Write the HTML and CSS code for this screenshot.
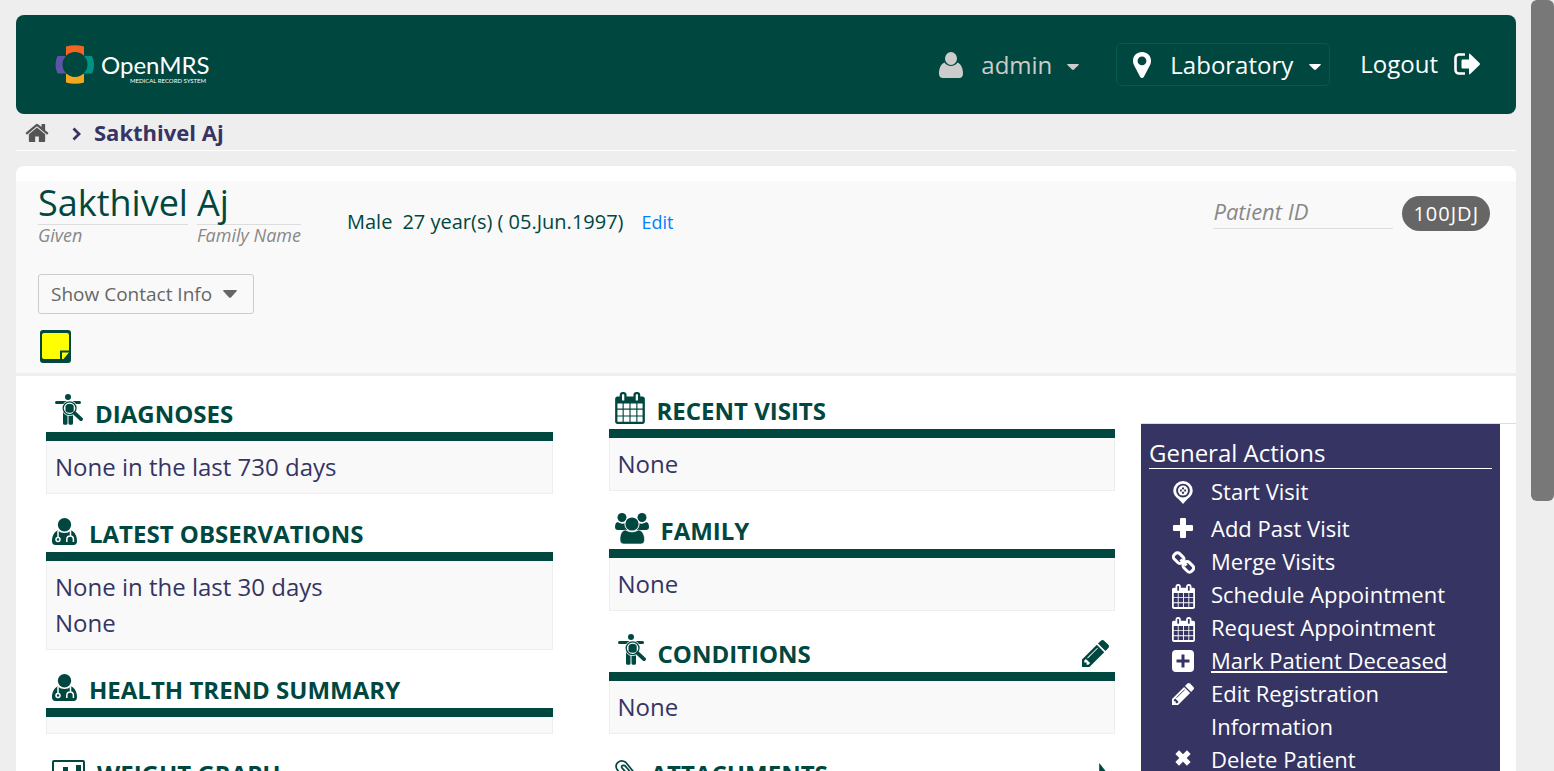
FILE: index.html
```html
<!DOCTYPE html>
<html lang="en">
<head>
<meta charset="utf-8">
<title>OpenMRS - Sakthivel Aj</title>
<link rel="stylesheet" href="styles.css">
</head>
<body>
<svg class="sprite" aria-hidden="true">
  <symbol id="i-home" viewBox="64 192 1664 1344"><path d="M1472 992v480q0 26-19 45t-45 19h-384v-384h-256v384h-384q-26 0-45-19t-19-45v-480q0-1 .5-3t.5-3l575-474 575 474q1 2 1 6zm223-69l-62 74q-8 9-21 11h-3q-13 0-21-7l-692-577-692 577q-12 8-24 7-13-2-21-11l-62-74q-8-10-7-23.500t11-21.500l719-599q32-26 76-26t76 26l244 204v-195q0-14 9-23t23-9h192q14 0 23 9t9 23v408l219 182q10 8 11 21.500t-7 23.500z"/></symbol>
  <symbol id="i-pencil" viewBox="128 149 1515 1515"><path d="M491 1536l91-91-235-235-91 91v107h128v128h107zm523-928q0-22-22-22-10 0-17 7l-542 542q-7 7-7 17 0 22 22 22 10 0 17-7l542-542q7-7 7-17zm-54-192l416 416-832 832h-416v-416zm683 96q0 53-37 90l-166 166-416-416 166-165q36-38 90-38 53 0 91 38l235 234q37 39 37 91z"/></symbol>
  <symbol id="i-calendar" viewBox="64 0 1664 1792"><path d="M192 1664h288v-288h-288v288zm352 0h320v-288h-320v288zm-352-352h288v-320h-288v320zm352 0h320v-320h-320v320zm-352-384h288v-288h-288v288zm736 736h320v-288h-320v288zm-384-736h320v-288h-320v288zm768 736h288v-288h-288v288zm-384-352h320v-320h-320v320zm-352-864v-288q0-13-9.500-22.500t-22.500-9.500h-64q-13 0-22.500 9.500t-9.500 22.500v288q0 13 9.500 22.500t22.500 9.500h64q13 0 22.500-9.500t9.500-22.500zm736 864h288v-320h-288v320zm-384-384h320v-288h-320v288zm384 0h288v-288h-288v288zm32-480v-288q0-13-9.500-22.500t-22.500-9.500h-64q-13 0-22.500 9.500t-9.500 22.500v288q0 13 9.500 22.500t22.500 9.500h64q13 0 22.500-9.500t9.500-22.500zm384-64v1280q0 52-38 90t-90 38h-1408q-52 0-90-38t-38-90v-1280q0-52 38-90t90-38h128v-96q0-66 47-113t113-47h64q66 0 113 47t47 113v96h384v-96q0-66 47-113t113-47h64q66 0 113 47t47 113v96h128q52 0 90 38t38 90z"/></symbol>
  <symbol id="i-user" viewBox="0 0 24 26"><ellipse cx="12" cy="6.500" rx="6" ry="6.500"/><path d="M5.500 10.500C8 15 16 15 18.500 10.500 22.500 12 24 17 24 21.500 24 24.500 22.500 26 20 26H4C1.500 26 0 24.500 0 21.500 0 17 1.500 12 5.500 10.500z"/></symbol>
  <symbol id="i-pin" viewBox="0 0 18 26"><path fill-rule="evenodd" d="M9 0c5.200 0 9 3.800 9 8.800 0 1.600-.3 2.800-.8 3.900L10.800 25c-.7 1.300-2.900 1.300-3.600 0L.8 12.700C.3 11.600 0 10.400 0 8.800 0 3.800 3.800 0 9 0zm0 4.500a4.400 4.400 0 1 0 0 8.800 4.400 4.400 0 0 0 0-8.800z"/></symbol>
  <symbol id="i-caret" viewBox="0 0 12 6" preserveAspectRatio="none"><path d="M.8 0h10.400q1.200 0 .4 1L7 5.500q-1 .8-2 0L.4 1Q-.4 0 .8 0z"/></symbol>
  <symbol id="i-logout" viewBox="0 0 26 22"><path d="M11 1.500H5A3.500 3.500 0 0 0 1.500 5v12A3.500 3.500 0 0 0 5 20.500h6" fill="none" stroke="currentColor" stroke-width="2.600"/><path d="M7.500 7.500q0-1 1-1H15V1.500q0-1.500 1.200-.5l9.300 9q.8 1 0 2l-9.300 9Q15 22 15 20.500v-5H8.500q-1 0-1-1z"/></symbol>
  <symbol id="i-chevron" viewBox="0 0 9 14"><path d="M1.500 1.500L7 7l-5.500 5.500" fill="none" stroke="currentColor" stroke-width="2.800"/></symbol>
  <symbol id="i-note" viewBox="0 0 31 33"><rect width="31" height="33" rx="3"/><path fill="#ff0" d="M4 3h23q2 0 2 2v15.500h-9V29H4q-2 0-2-2V5q0-2 2-2zM22 22.500h7L23.500 29H22z"/></symbol>
  <symbol id="i-diagnosis" viewBox="0 0 28 31"><circle cx="13" cy="3" r="3"/><path d="M1.500 7H24.500a1.500 1.500 0 0 1 0 3H1.500a1.500 1.500 0 0 1 0-3zM8 18h4.500v11.200a1.500 1.500 0 0 1-1.500 1.500H9.500A1.500 1.500 0 0 1 8 29.200zM13.500 18H18v11.200a1.500 1.500 0 0 1-1.500 1.500H15a1.500 1.500 0 0 1-1.500-1.500z"/><circle cx="14.600" cy="14.200" r="7.700" fill="#fff"/><circle cx="14.600" cy="14.200" r="6.400" fill="none" stroke="currentColor" stroke-width="1.300"/><path d="M10.500 12q1-2.200 4.100-2.200t4.100 2v5.400q-1.500 1.600-4 1.600t-4.200-1.600z"/><path d="M19.600 19.200l6.400 5.900" fill="none" stroke="currentColor" stroke-width="3.800" stroke-linecap="round"/></symbol>
  <symbol id="i-doctor" viewBox="0 0 25 27"><circle cx="12.500" cy="6.700" r="6.700"/><path d="M5.500 12.500q7 5 14 0C23 14 25 18.500 25 23q0 4-3.500 4h-18Q0 27 0 23c0-4.500 2-9 5.500-10.500z"/><path d="M6 13v6M18.500 13v5M14.800 24v-2.500q0-3.500 3.300-3.500t3.300 3.500V24" fill="none" stroke="#fff" stroke-width="1.500"/><circle cx="6" cy="21.500" r="2" fill="currentColor" stroke="#fff" stroke-width="1.500"/></symbol>
  <symbol id="i-family" viewBox="0 0 34 31"><circle cx="7" cy="4.500" r="4.500"/><circle cx="27" cy="4.500" r="4.500"/><path d="M2.500 9q4.500 3 8 1 .2 4.500 3.500 7H3q-3 0-3-3 0-4 2.500-5zM31.500 9q-4.500 3-8 1-.2 4.500-3.500 7h11q3 0 3-3 0-4-2.500-5z"/><circle cx="17" cy="11" r="7.600" fill="#fff"/><circle cx="17" cy="11" r="6.600"/><path d="M10.500 17q6.500 4 13 0c4 .5 6 5 6 9.500q0 4.500-4 4.500H9q-4 0-4-4.500c0-4.500 1.500-9 5.500-9.500z" stroke="#fff" stroke-width=".6"/></symbol>
  <symbol id="i-chart" viewBox="0 0 33 27"><rect x="1" y="1" width="31" height="25" rx="1" fill="none" stroke="currentColor" stroke-width="2"/><path d="M11 7h5v15h-5zM24 5h5v17h-5zM5 13h4v9H5zM18 13h4v9h-4z"/></symbol>
  <symbol id="i-clip" viewBox="0 0 28 30"><path d="M8 9l12 13q3 4 0 6t-5 0L2.500 11q-3-5 1-8.500t9 0L26 19M8 9q-1-3 2-3 2 0 3 2l10 12" fill="none" stroke="currentColor" stroke-width="2"/></symbol>
  <symbol id="i-right" viewBox="0 0 8 20"><path d="M0 0l8 10-8 10z"/></symbol>
  <symbol id="i-visit" viewBox="0 0 20 23"><path fill-rule="evenodd" d="M10 0a9.700 9.700 0 0 1 9.700 9.500c0 4-2.600 6.500-5.200 8.500L10 23l-4.500-5C2.900 16 .3 13.500.3 9.500A9.700 9.700 0 0 1 10 0zm0 2.700a6.900 6.900 0 1 0 0 13.800 6.900 6.900 0 0 0 0-13.800z"/><circle cx="10" cy="9.600" r="5"/><path d="M10 6.500v6.200M6.900 9.600h6.200" fill="none" stroke="#363463" stroke-width="2"/><circle cx="10" cy="9.600" r="1.300"/></symbol>
  <symbol id="i-plus" viewBox="0 0 20 20"><path d="M7 1q0-1 1-1h4q1 0 1 1v6h6q1 0 1 1v4q0 1-1 1h-6v6q0 1-1 1H8q-1 0-1-1v-6H1q-1 0-1-1V8q0-1 1-1h6z"/></symbol>
  <symbol id="i-link" viewBox="0 0 23 23"><g fill="none" stroke="currentColor" stroke-width="3"><rect x="1.200" y="3.300" width="11" height="7.600" rx="3" transform="rotate(45 6.700 7.100)"/><rect x="10.800" y="12" width="11" height="7.600" rx="3" transform="rotate(45 16.300 15.800)"/><path d="M8.500 8.500l6 6"/></g></symbol>
  <symbol id="i-plusbox" viewBox="0 0 22 22"><path fill-rule="evenodd" d="M4 0h14q4 0 4 4v14q0 4-4 4H4q-4 0-4-4V4q0-4 4-4zm5.500 4.500v5h-5v3h5v5h3v-5h5v-3h-5v-5z"/></symbol>
  <symbol id="i-times" viewBox="0 0 18 18"><path d="M3.200 3.200l11.600 11.600M14.800 3.200L3.200 14.800" fill="none" stroke="currentColor" stroke-width="5.200"/></symbol>
</svg>

<div class="shell">
  <div class="page">
    <header class="topbar">
      <a class="brand" href="#" aria-label="OpenMRS home">
        <svg width="160" height="42" viewBox="0 0 160 42">
          <path fill="#f26522" d="M11 2.500Q20 0 29 2.500V12Q20 5 11 12z"/>
          <path fill="#f2a81d" d="M11 38.500Q20 41 29 38.500V29Q20 36 11 29z"/>
          <path fill="#5b57a6" d="M2.500 12H12Q5 20.500 12 29.500H2.500Q-1.500 20.500 2.500 12z"/>
          <path fill="#009384" d="M37 12H28Q35 20.500 28 29.500H37Q41 20.500 37 12z"/>
          <circle cx="20" cy="20.500" r="12.500" fill="#00473f"/>
          <text class="brand-name" x="46" y="30">OpenMRS</text>
          <text class="brand-tag" x="75" y="39">MEDICAL RECORD SYSTEM</text>
        </svg>
      </a>
      <nav class="session">
        <button class="user" type="button"><svg width="24" height="26"><use href="#i-user"/></svg><span>admin</span><svg class="caret" width="12" height="6"><use href="#i-caret"/></svg></button>
        <button class="location" type="button"><svg width="18" height="26"><use href="#i-pin"/></svg><span>Laboratory</span><svg class="caret" width="12" height="6"><use href="#i-caret"/></svg></button>
        <a class="logout" href="#"><span>Logout</span><svg width="26" height="22"><use href="#i-logout"/></svg></a>
      </nav>
    </header>

    <nav class="crumbs" aria-label="Breadcrumb">
      <a class="home" href="#" aria-label="Home"><svg width="24" height="19"><use href="#i-home"/></svg></a>
      <svg class="sep" width="9" height="14"><use href="#i-chevron"/></svg>
      <span>Sakthivel Aj</span>
    </nav>

    <main class="card">
      <section class="patient">
        <div class="identity">
          <h1 class="names">
            <span class="name"><span class="value">Sakthivel</span><em>Given</em></span>
            <span class="name"><span class="value">Aj</span><em>Family Name</em></span>
          </h1>
          <div class="demographics"><span>Male</span><span>27 year(s) ( 05.Jun.1997)</span><a href="#">Edit</a></div>
          <div class="ids"><em>Patient ID</em><span class="pill">100JDJ</span></div>
        </div>
        <button class="contact" type="button">Show Contact Info<svg width="14" height="8"><use href="#i-caret"/></svg></button>
        <button class="note" type="button" aria-label="Sticky note"><svg width="31" height="33"><use href="#i-note"/></svg></button>
      </section>

      <div class="dashboard">
        <div class="column">
          <section class="widget">
            <h2 class="tall"><svg class="raised" width="28" height="31"><use href="#i-diagnosis"/></svg>Diagnoses</h2>
            <div class="content"><p>None in the last 730 days</p></div>
          </section>
          <section class="widget">
            <h2><svg class="raised" width="25" height="27"><use href="#i-doctor"/></svg>Latest Observations</h2>
            <div class="content"><p>None in the last 30 days</p><p>None</p></div>
          </section>
          <section class="widget">
            <h2><svg class="raised" width="25" height="27"><use href="#i-doctor"/></svg>Health Trend Summary</h2>
            <div class="content"></div>
          </section>
          <section class="widget">
            <h2><svg width="33" height="27"><use href="#i-chart"/></svg>Weight Graph</h2>
            <div class="content"></div>
          </section>
        </div>
        <div class="column">
          <section class="widget">
            <h2><svg width="30" height="32"><use href="#i-calendar"/></svg>Recent Visits</h2>
            <div class="content"><p>None</p></div>
          </section>
          <section class="widget">
            <h2><svg width="34" height="31"><use href="#i-family"/></svg>Family</h2>
            <div class="content"><p>None</p></div>
          </section>
          <section class="widget">
            <h2 class="tall"><svg class="raised" width="28" height="31"><use href="#i-diagnosis"/></svg>Conditions
              <a class="more" href="#" aria-label="Edit conditions"><svg width="27" height="27"><use href="#i-pencil"/></svg></a></h2>
            <div class="content"><p>None</p></div>
          </section>
          <section class="widget">
            <h2><svg width="24" height="28"><use href="#i-clip"/></svg>Attachments
              <a class="more" href="#" aria-label="Open attachments"><svg width="10" height="24"><use href="#i-right"/></svg></a></h2>
            <div class="content"></div>
          </section>
        </div>
        <aside class="side">
          <div class="actions">
            <h3>General Actions</h3>
            <ul>
              <li class="first"><a href="#"><svg width="20" height="23"><use href="#i-visit"/></svg><span>Start Visit</span></a></li>
              <li><a href="#"><svg width="20" height="20"><use href="#i-plus"/></svg><span>Add Past Visit</span></a></li>
              <li><a href="#"><svg width="23" height="23"><use href="#i-link"/></svg><span>Merge Visits</span></a></li>
              <li><a href="#"><svg width="23" height="25"><use href="#i-calendar"/></svg><span>Schedule Appointment</span></a></li>
              <li><a href="#"><svg width="23" height="25"><use href="#i-calendar"/></svg><span>Request Appointment</span></a></li>
              <li><a class="hovered" href="#"><svg width="22" height="22"><use href="#i-plusbox"/></svg><span>Mark Patient Deceased</span></a></li>
              <li><a href="#"><svg width="22" height="22"><use href="#i-pencil"/></svg><span>Edit Registration Information</span></a></li>
              <li><a href="#"><svg width="18" height="18"><use href="#i-times"/></svg><span>Delete Patient</span></a></li>
            </ul>
          </div>
        </aside>
      </div>
    </main>
  </div>
  <div class="scrollbar"><div class="thumb"></div></div>
</div>
</body>
</html>
```

FILE: styles.css
```css
* { box-sizing: border-box; }
body {
  margin: 0;
  background: #eee;
  color: #363463;
  font-family: "Open Sans", "Noto Sans", sans-serif;
  font-size: 24px;
}
h1, h2, h3, p, ul { margin: 0; padding: 0; font-weight: 400; }
ul { list-style: none; }
a { color: inherit; text-decoration: none; }
button { font: inherit; color: inherit; background: none; border: 0; padding: 0; cursor: pointer; }
svg { fill: currentColor; flex: none; display: block; }
.sprite { position: absolute; width: 0; height: 0; }

.shell { display: flex; height: 100vh; overflow: hidden; }
.page { flex: 1; min-width: 0; padding: 15px 14px 0 16px; }
.scrollbar { width: 24px; padding-left: 1px; }
.thumb { height: 65%; background: #787878; border-radius: 6px; }

.topbar {
  display: flex;
  align-items: center;
  justify-content: space-between;
  min-height: 99px;
  padding: 0 36px 0 39px;
  background: #00473f;
  color: #fff;
  border-radius: 8px;
}
.brand-name { font: 24px Lato, sans-serif; fill: #fff; }
.brand-tag { font: 6px Lato, sans-serif; fill: #fff; }
.session { display: flex; align-items: center; line-height: 33px; }
.session > * { display: flex; align-items: center; }
.user { gap: 18px; color: #ccc; margin-right: 37px; }
.user .caret, .location .caret { margin: 4px 0 0 -3px; }
.location {
  gap: 19px;
  min-height: 43px;
  margin-right: 30px;
  padding: 0 8px 0 16px;
  border: 1px solid #005c52;
  border-radius: 5px;
}
.logout { gap: 16px; padding-bottom: 2px; }

.crumbs {
  display: flex;
  align-items: center;
  height: 37px;
  padding-left: 9px;
  border-bottom: 1px solid #fff;
  font-size: 22px;
  font-weight: 700;
}
.home { color: #555; }
.sep { margin: 4px 13px 0 23px; }

.card { margin-top: 15px; padding-top: 15px; min-height: 900px; background: #fff; border-radius: 8px 8px 0 0; }
.patient { padding: 0 26px 10px 22px; background: #f9f9f9; border-bottom: 3px solid #eee; }
.identity { display: flex; height: 93px; }
.names { display: flex; gap: 9px; color: #00473f; }
.name { display: flex; flex-direction: column; }
.value { height: 44px; line-height: 44px; font-size: 36px; border-bottom: 1px solid #ddd; }
.names em { font-size: 18px; line-height: 20px; color: #888; }
.demographics { display: flex; gap: 10px; margin-left: 46px; padding-top: 26px; font-size: 20px; line-height: 30px; color: #00473f; }
.demographics a { margin-left: 8px; font-size: 18px; color: #007fff; }
.ids { display: flex; align-items: flex-start; gap: 9px; margin-left: auto; padding-top: 15px; }
.ids em { width: 180px; height: 33px; border-bottom: 1px solid #ddd; font-size: 22px; line-height: 30px; color: #888; }
.pill { padding: 0 11px; border-radius: 18px; background: #666; color: #fff; font-size: 20px; line-height: 35px; letter-spacing: 1px; }
.contact {
  display: flex;
  align-items: center;
  gap: 11px;
  height: 40px;
  padding: 0 16px 0 12px;
  border: 1px solid #ccc;
  border-radius: 3px;
  color: #666;
  font-size: 19px;
}
.note { display: block; margin: 16px 0 0 2px; color: #00473f; }

.dashboard { display: grid; grid-template-columns: 3fr 3fr 2fr; }
.column { padding: 15px 26px 0 30px; }
.widget { margin-bottom: 20px; }
.widget h2 {
  display: flex;
  align-items: flex-end;
  gap: 12px;
  height: 47px;
  padding: 0 6px 5px;
  border-bottom: 9px solid #00473f;
  color: #00473f;
  font-size: 24px;
  line-height: 26px;
  font-weight: 700;
  text-transform: uppercase;
}
.widget h2.tall { height: 50px; padding-left: 9px; }
.raised { margin-bottom: 2px; }
.more { margin-left: auto; }
.content { padding: 8px; border: 1px solid #eee; border-top: 0; background: #f9f9f9; line-height: 36px; }

.side { margin-top: 47px; padding-right: 16px; border-top: 1px solid #ddd; }
.actions { min-height: 600px; padding: 15px 8px; background: #363463; color: #fff; }
.actions h3 { padding-bottom: 1px; font-size: 24px; line-height: 28px; border-bottom: 1px solid #fff; }
.actions ul { padding-top: 6px; font-size: 22px; line-height: 33px; }
.actions .first { height: 37px; }
.actions a { display: grid; grid-template-columns: 24px 1fr; column-gap: 16px; padding-left: 22px; }
.actions svg { justify-self: center; margin-top: 6px; }
.hovered span { text-decoration: underline; }
```
